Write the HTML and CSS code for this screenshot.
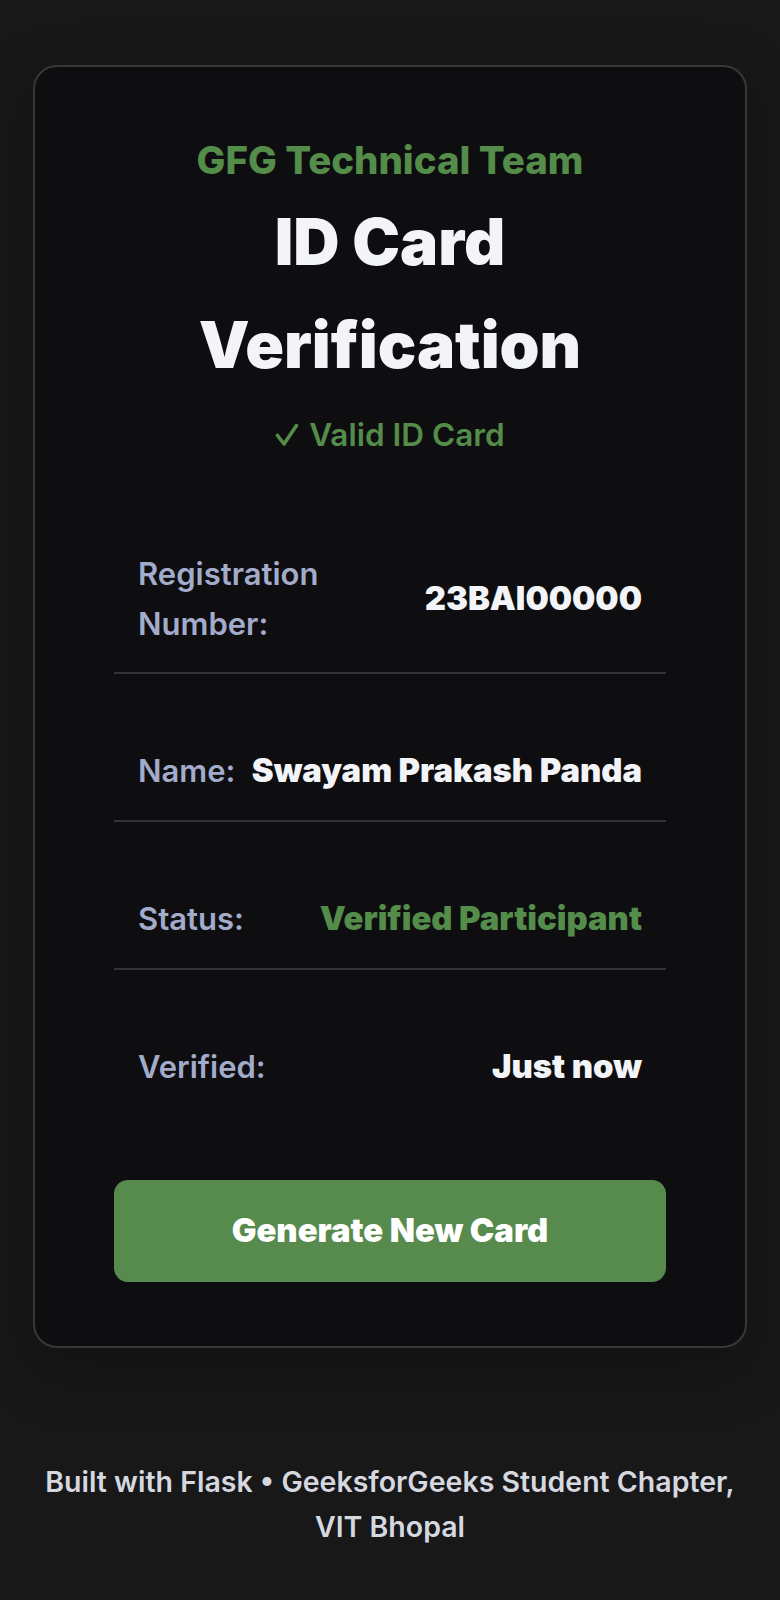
FILE: index.html
```html
<!DOCTYPE html>
<html lang="en">
<head>
<meta charset="utf-8">
<title>ID Card Verification</title>
<link rel="stylesheet" href="styles.css">
</head>
<body>
<main class="page">
  <section class="card">
    <h2 class="team">GFG Technical Team</h2>
    <h1 class="title">ID Card Verification</h1>
    <p class="status"><svg class="check" viewBox="0 0 24 22" width="24" height="22" aria-hidden="true"><path d="M2.5 11.5 L9 20 L21.5 1.5" fill="none" stroke="currentColor" stroke-width="3.6" stroke-linecap="round" stroke-linejoin="round"/></svg> Valid ID Card</p>
    <div class="rows">
      <div class="row">
        <span class="label">Registration Number:</span>
        <span class="value">23BAI00000</span>
      </div>
      <div class="row">
        <span class="label">Name:</span>
        <span class="value">Swayam Prakash Panda</span>
      </div>
      <div class="row">
        <span class="label">Status:</span>
        <span class="value value-green">Verified Participant</span>
      </div>
      <div class="row">
        <span class="label">Verified:</span>
        <span class="value">Just now</span>
      </div>
    </div>
    <button class="btn" type="button">Generate New Card</button>
  </section>
  <footer class="footer">Built with Flask • GeeksforGeeks Student Chapter, VIT Bhopal</footer>
</main>
</body>
</html>
```

FILE: styles.css
```css
* { box-sizing: border-box; }

html, body {
  margin: 0;
  padding: 0;
  background: #181818;
}

body {
  font-family: Inter, "Noto Sans", sans-serif;
  line-height: 1.6;
  color: #f3f4f8;
}

.page {
  padding: 65px 33px 0;
}

.card {
  background: #0e0e10;
  border: 2px solid #38383b;
  border-radius: 24px;
  padding: 63px 79px 64px;
  box-shadow: 0 20px 60px rgba(0, 0, 0, 0.25);
  text-align: center;
}

.team {
  margin: 0;
  font-size: 38.4px;
  font-weight: 800;
  color: #548c4a;
  line-height: 1.6;
}

.title {
  margin: 0 0 15px;
  font-size: 64px;
  font-weight: 900;
  color: #f3f4f8;
  line-height: 1.6;
}

.status {
  margin: 0 0 66px;
  font-size: 31.5px;
  font-weight: 600;
  color: #548c4a;
  line-height: 48px;
}

.check {
  display: inline-block;
  vertical-align: 0;
  margin-right: 2px;
}

.rows {
  display: flex;
  flex-direction: column;
  gap: 48px;
}

.row {
  display: flex;
  align-items: center;
  justify-content: space-between;
  gap: 16px;
  padding: 24px;
  border-bottom: 2px solid #333336;
  font-size: 31px;
  line-height: 49.6px;
  text-align: left;
}

.row:last-child {
  border-bottom: none;
}

.label {
  color: #a3abcb;
  font-weight: 600;
}

.value {
  color: #f3f4f8;
  font-size: 32.8px;
  font-weight: 900;
  text-align: right;
}

.value-green {
  color: #548c4a;
}

.btn {
  display: block;
  width: 100%;
  margin-top: 65px;
  padding: 26px 24px;
  border: none;
  border-radius: 14px;
  background: #578b4e;
  color: #ffffff;
  font-family: Inter, "Noto Sans", sans-serif;
  font-size: 32.8px;
  font-weight: 900;
  line-height: 49.6px;
  cursor: pointer;
}

.footer {
  margin-top: 111px;
  padding: 0 10px;
  text-align: center;
  font-size: 28.5px;
  font-weight: 600;
  color: #d6d8e0;
  line-height: 1.6;
}
```
